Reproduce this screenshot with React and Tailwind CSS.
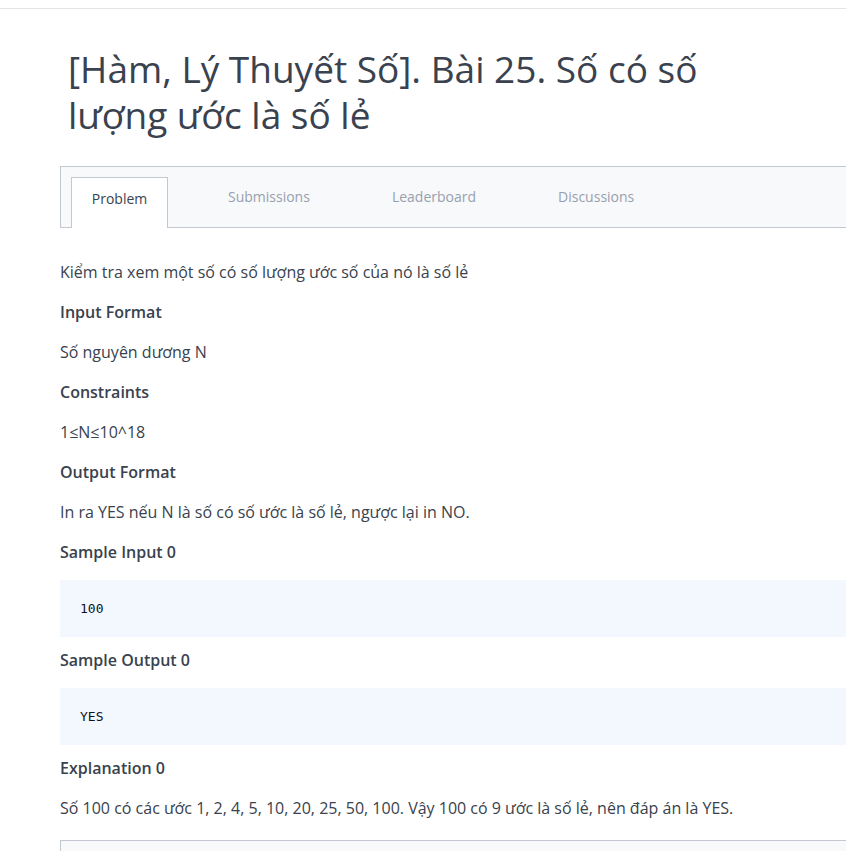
export default function App() {
  const font = { fontFamily: '"Open Sans", "Noto Sans", sans-serif' };
  const mono = { fontFamily: '"DejaVu Sans Mono", monospace' };
  return (
    <div className="w-[846px] h-[851px] overflow-hidden bg-white text-[#39424e]" style={font}>
      <div className="h-[9px] border-b border-[#e4e4e4]" />
      <div className="w-[900px] pl-[60px]">
        <h1 className="w-[700px] pl-[8px] pt-[37px] text-[37px] leading-[46px] font-normal text-[#39424e]">
          [Hàm, Lý Thuyết Số]. Bài 25. Số có số lượng ước là số lẻ
        </h1>
        <div className="mt-[28px] h-[62px] border border-r-0 border-[#c2c7d0] bg-[#f8f9fa] flex items-end pl-[10px]">
          <div className="w-[97px] h-[51px] -mb-px bg-white border border-b-0 border-[#c2c7d0] flex justify-center pt-[11px] text-[14px] leading-[20px] text-[#39424e]">
            Problem
          </div>
          <div className="h-[51px] flex items-start pt-[11px] text-[14px] leading-[20px] text-[#979faf]">
            <span className="ml-[60px]">Submissions</span>
            <span className="ml-[82px]">Leaderboard</span>
            <span className="ml-[82px]">Discussions</span>
          </div>
        </div>
        <div className="text-[16px] leading-[22px] pt-[33px] flex flex-col">
          <p>Kiểm tra xem một số có số lượng ước số của nó là số lẻ</p>
          <p className="mt-[18px] font-semibold">Input Format</p>
          <p className="mt-[18px]">Số nguyên dương N</p>
          <p className="mt-[18px] font-semibold">Constraints</p>
          <p className="mt-[18px]">1≤N≤10^18</p>
          <p className="mt-[18px] font-semibold">Output Format</p>
          <p className="mt-[18px]">In ra YES nếu N là số có số ước là số lẻ, ngược lại in NO.</p>
          <p className="mt-[18px] font-semibold">Sample Input 0</p>
          <div className="mt-[17px] h-[57px] bg-[#f3f7fe] flex items-center pl-[20px] text-[13px] text-[#0e141e]" style={mono}>
            100
          </div>
          <p className="mt-[12px] font-semibold">Sample Output 0</p>
          <div className="mt-[17px] h-[57px] bg-[#f3f7fe] flex items-center pl-[20px] text-[13px] text-[#0e141e]" style={mono}>
            YES
          </div>
          <p className="mt-[12px] font-semibold">Explanation 0</p>
          <p className="mt-[18px]">Số 100 có các ước 1, 2, 4, 5, 10, 20, 25, 50, 100. Vậy 100 có 9 ước là số lẻ, nên đáp án là YES.</p>
          <div className="mt-[21px] h-[40px] border border-r-0 border-[#c2c7d0] bg-[#f8f9fa]" />
        </div>
      </div>
    </div>
  );
}
